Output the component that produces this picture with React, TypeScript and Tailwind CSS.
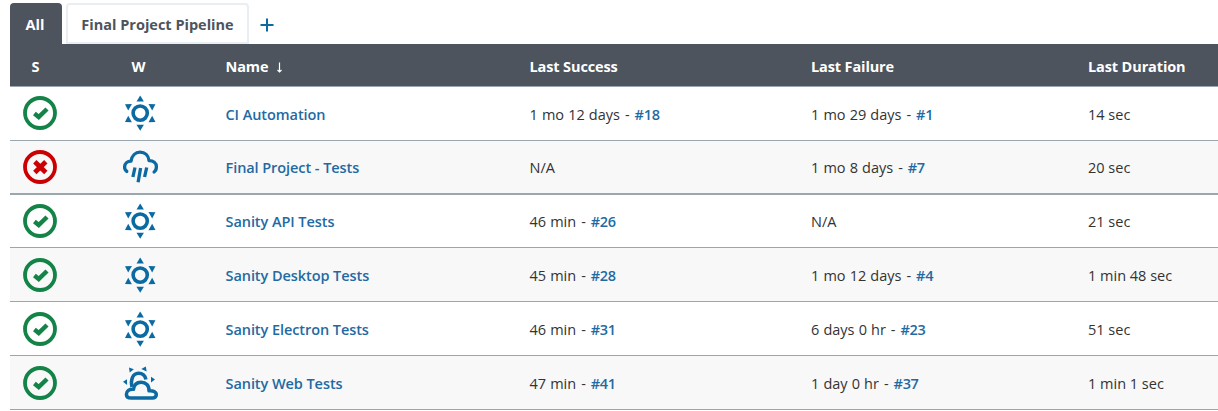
import React from "react";

type Weather = "sun" | "rain" | "cloudy";
type Build = { age: string; id?: string };
type Job = {
  ok: boolean;
  weather: Weather;
  name: string;
  success: Build;
  failure: Build;
  duration: string;
  row: string;
};

const jobs: Job[] = [
  { ok: true, weather: "sun", name: "CI Automation", success: { age: "1 mo 12 days", id: "#18" }, failure: { age: "1 mo 29 days", id: "#1" }, duration: "14 sec", row: "h-[54px] border-b [&>div]:pb-px" },
  { ok: false, weather: "rain", name: "Final Project - Tests", success: { age: "N/A" }, failure: { age: "1 mo 8 days", id: "#7" }, duration: "20 sec", row: "h-[54px] border-b-2 bg-[#f8f8f8]" },
  { ok: true, weather: "sun", name: "Sanity API Tests", success: { age: "46 min", id: "#26" }, failure: { age: "N/A" }, duration: "21 sec", row: "h-[53px] border-b" },
  { ok: true, weather: "sun", name: "Sanity Desktop Tests", success: { age: "45 min", id: "#28" }, failure: { age: "1 mo 12 days", id: "#4" }, duration: "1 min 48 sec", row: "h-[54px] border-b bg-[#f8f8f8] [&>div]:pt-px" },
  { ok: true, weather: "sun", name: "Sanity Electron Tests", success: { age: "46 min", id: "#31" }, failure: { age: "6 days 0 hr", id: "#23" }, duration: "51 sec", row: "h-[54px] border-b [&>div]:pt-px" },
  { ok: true, weather: "cloudy", name: "Sanity Web Tests", success: { age: "47 min", id: "#41" }, failure: { age: "1 day 0 hr", id: "#37" }, duration: "1 min 1 sec", row: "h-[54px] border-b bg-[#f8f8f8] [&>div]:pt-px" },
];

const columns = "grid grid-cols-[60px_155.5px_304px_281.5px_277px_1fr] items-center";

function StatusIcon({ ok }: { ok: boolean }) {
  return (
    <svg width="34" height="34" viewBox="-17 -17 34 34" fill="none" className={ok ? "text-[#138347]" : "text-[#cc0003]"}>
      <circle r="15" stroke="currentColor" strokeWidth="3.8" />
      {ok ? (
        <path d="M-5.6 0.6 L-1.3 4 L7 -4" stroke="currentColor" strokeWidth="4.5" />
      ) : (
        <path d="M-5.2 -5.2 L5.8 5.4 M5.8 -5.2 L-5.2 5.4" stroke="currentColor" strokeWidth="4.8" />
      )}
    </svg>
  );
}

function WeatherIcon({ kind }: { kind: Weather }) {
  if (kind === "sun") {
    return (
      <svg width="40" height="40" viewBox="-20 -20 40 40" fill="none" className="text-[#0b6aa2]">
        <circle cx="0.2" cy="0.1" r="7.1" stroke="currentColor" strokeWidth="3.6" />
        {[0, 60, 120, 180, 240, 300].map((a) => (
          <path key={a} d="M0 -17.6 L3.7 -11.7 L-3.7 -11.7 Z" transform={`translate(.2 .1) rotate(${a})`} fill="currentColor" />
        ))}
      </svg>
    );
  }
  if (kind === "rain") {
    return (
      <svg width="40" height="40" viewBox="10 2 40 40" fill="none" stroke="currentColor" strokeWidth="3.3" strokeLinecap="round" strokeLinejoin="round" className="text-[#0b6aa2]">
        <path d="M16.8 26.4 C15.2 25.2 14.5 23.7 14.6 21.8 C14.8 18.5 17.3 16.2 21 16.2 C21.8 10.6 25.5 7.2 30 7.2 C35 7.2 38.5 10.5 39 15.6 C43.4 15.6 46.4 18 46.4 21.8 C46.4 24.2 45.7 25.9 44.1 27" />
        <path strokeLinecap="butt" d="M25 22.5 L22.9 32 M30.6 23 L28.1 37.3 M36.7 22.5 L34.6 32" />
      </svg>
    );
  }
  return (
    <svg width="40" height="40" viewBox="10 3 40 40" fill="none" className="text-[#0b6aa2]">
      <g stroke="currentColor" strokeWidth="3.5" strokeLinejoin="round">
        <path d="M22 27 C20.3 19.5 22.8 13.4 28.4 13.2 C32.5 13.1 35.3 15.7 35.9 19.6" />
        <path d="M21.2 38 H42.5 C44.8 38 46.3 36.6 46.3 34.8 C46.3 32 43 30.3 39 30.8 C39.3 25.5 35.8 22.1 31 22.2 C26.7 22.3 24 25 23.5 29.2 C19.3 28.8 16.5 30.9 16.4 34.2 C16.4 36.5 18.3 38 21.2 38 Z" />
      </g>
      <path d="M19 7.6 L23.9 9.3 L19.7 12.6 Z M31.3 8.9 L35.8 6.5 L36.7 11.4 Z M13 21.8 L17 19.3 L17.1 25 Z M41 16.8 L45 19.5 L41 22.6 Z" fill="currentColor" />
    </svg>
  );
}

function BuildCell({ build }: { build: Build }) {
  return (
    <span className="pt-0.5 [word-spacing:0.35px]">
      {build.age}
      {build.id && (
        <>
          <span className="[word-spacing:1.2px]">{" - "}</span>
          <a className="font-semibold tracking-[-0.3px] text-[#1f6aa3]">{build.id}</a>
        </>
      )}
    </span>
  );
}

export default function App() {
  return (
    <div className="h-[411px] overflow-hidden bg-white pt-[3px] pl-2.5 font-['Open_Sans','Noto_Sans',sans-serif] text-[14.5px] leading-5 whitespace-nowrap text-[#333333]">
      <nav className="flex h-[41px]">
        <div className="flex w-[52px] justify-center rounded-t bg-[#4d545d] pt-3 font-bold text-white">
          <span className="-ml-0.5">All</span>
        </div>
        <div className="ml-1 flex w-[183px] justify-center rounded-t border-2 border-[#e9eef2] pt-2.5 font-bold text-[#4d545d]">
          Final Project Pipeline
        </div>
        <svg width="14" height="14" viewBox="0 0 14 14" className="mt-[15px] ml-[11px] text-[#0b6aa2]">
          <path d="M7 0.5 V13.5 M0.5 7 H13.5" stroke="currentColor" strokeWidth="2" />
        </svg>
      </nav>
      <div className={`${columns} h-[43px] border-b border-[#9ba7af] bg-[#4d545d] pt-1 font-bold tracking-[-0.12px] text-white`}>
        <span className="pl-[21.5px]">S</span>
        <span className="pl-[61.5px]">W</span>
        <span className="flex items-center gap-2">
          Name
          <svg width="7" height="11" viewBox="0 0 7 11" fill="none" stroke="currentColor">
            <path d="M3.5 0.5 V10 M1.5 8 L3.5 10 L5.5 8" strokeWidth="1.2" />
          </svg>
        </span>
        <span>Last Success</span>
        <span>Last Failure</span>
        <span>Last Duration</span>
      </div>
      {jobs.map((job) => (
        <div key={job.name} className={`${columns} border-[#9ba7af] ${job.row}`}>
          <div className="pl-[13px]">
            <StatusIcon ok={job.ok} />
          </div>
          <div className="pl-[50px]">
            <WeatherIcon kind={job.weather} />
          </div>
          <a className="pt-0.5 font-semibold tracking-[-0.07px] text-[#1f6aa3]">{job.name}</a>
          <BuildCell build={job.success} />
          <BuildCell build={job.failure} />
          <span className="pt-0.5">{job.duration}</span>
        </div>
      ))}
    </div>
  );
}
